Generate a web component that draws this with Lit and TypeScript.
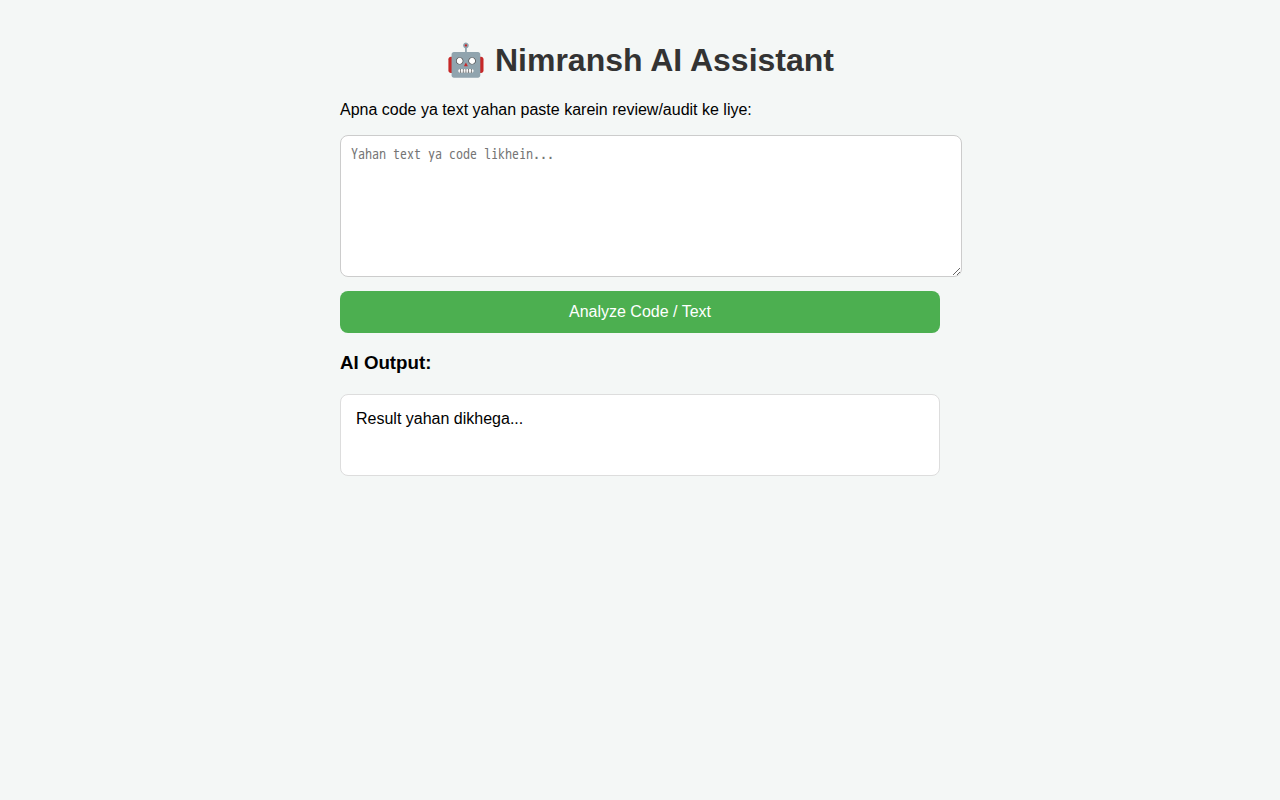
import { LitElement, html, css } from "lit";
import { customElement, state } from "lit/decorators.js";

@customElement("app-root")
export class AppRoot extends LitElement {
  static styles = css`
    :host {
      display: block;
      box-sizing: border-box;
      min-height: 100vh;
      padding: 20px;
      background: #f4f7f6;
      color: #000;
      font-family: "Liberation Sans", Arial, sans-serif;
      font-size: 16px;
    }
    .page {
      max-width: 600px;
      margin: 0 auto;
    }
    .title {
      margin: 21px 0 22px;
      font-size: 32px;
      color: #333;
      text-align: center;
    }
    .prompt {
      display: block;
      margin: 16px 0;
    }
    .input {
      display: block;
      box-sizing: content-box;
      width: 100%;
      height: 120px;
      padding: 10px;
      border: 1px solid #ccc;
      border-radius: 8px;
      font-family: "WenQuanYi Zen Hei Mono", "Noto Sans Mono CJK JP", "Noto Sans Mono CJK SC", monospace;
      font-size: 14px;
      line-height: 18px;
    }
    .submit {
      display: block;
      width: 100%;
      margin-top: 14px;
      padding: 12px;
      border: none;
      border-radius: 8px;
      background: #4caf50;
      color: #fff;
      font-family: inherit;
      font-size: 16px;
      cursor: pointer;
    }
    .heading {
      margin: 19px 0 20px;
      line-height: 22px;
    }
    .output {
      box-sizing: border-box;
      min-height: 82px;
      padding: 15px;
      border: 1px solid #ddd;
      border-radius: 8px;
      background: #fff;
      white-space: pre-wrap;
    }
  `;

  @state() private text = "";
  @state() private result = "Result yahan dikhega...";

  private onInput(e: Event) {
    this.text = (e.target as HTMLTextAreaElement).value;
  }

  private analyze() {
    if (this.text.trim()) this.result = this.text;
  }

  render() {
    return html`
      <main class="page">
        <h1 class="title">🤖 Nimransh AI Assistant</h1>
        <label class="prompt" for="source">Apna code ya text yahan paste karein review/audit ke liye:</label>
        <textarea id="source" class="input" placeholder="Yahan text ya code likhein..." .value=${this.text} @input=${this.onInput}></textarea>
        <button class="submit" type="button" @click=${this.analyze}>Analyze Code / Text</button>
        <h3 class="heading">AI Output:</h3>
        <div class="output" role="status">${this.result}</div>
      </main>
    `;
  }
}
